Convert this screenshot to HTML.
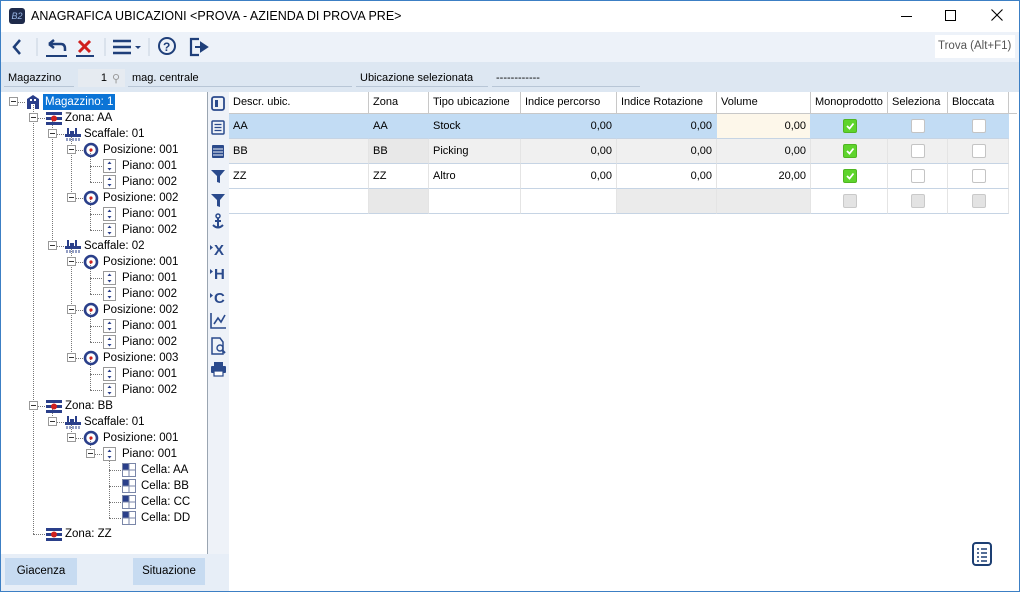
<!DOCTYPE html>
<html><head><meta charset="utf-8"><style>
*{box-sizing:border-box;margin:0;padding:0}
body{width:1020px;height:592px;overflow:hidden;font-family:"Liberation Sans",sans-serif;font-size:12px;color:#000;background:#fff;position:relative}
.abs{position:absolute}
#win{position:absolute;left:0;top:0;width:1020px;height:592px;border:1px solid #3c7fc4}
.title{left:1px;top:1px;width:1018px;height:31px;background:#fff}
.tb{left:1px;top:32px;width:1018px;height:30px;background:#edf2f9}
.fr{left:1px;top:62px;width:1018px;height:30px;background:#dde7f2}
.fld{position:absolute;top:69px;height:18px;border-bottom:1px solid #b8c6d6;padding:3px 4px;font-size:11px;white-space:nowrap}
.tree{left:1px;top:92px;width:207px;height:462px;background:#fff;border-right:1px solid #9aa5b1}
.tr{position:absolute;height:16px;font-size:11.5px;line-height:16px;white-space:nowrap}
.box{position:absolute;width:9px;height:9px;border:1px solid #999;background:#fff}
.box:after{content:"";position:absolute;left:1px;top:3px;width:5px;border-top:1px solid #333}
.vl{position:absolute;border-left:1px dotted #777;width:0}
.hl{position:absolute;border-top:1px dotted #777;height:0}
.ic{position:absolute;width:16px;height:16px}
.side{left:208px;top:92px;width:21px;height:462px;background:#eef2f8}
.bot{left:1px;top:554px;width:228px;height:37px;background:#e7eef7}
.btn{position:absolute;top:558px;height:27px;background:#c7dbf1;text-align:center;line-height:27px;font-size:11.5px}
.grid{left:229px;top:92px}
.c{position:absolute;height:25px;border-right:1px solid #d0d0d0;border-bottom:1px solid #c6d4e4;padding:0 4px;line-height:24px;font-size:11px;white-space:nowrap}
.h{height:22px;line-height:21px;background:#fff;border-right:1px solid #c8c8c8;border-bottom:1px solid #c8c8c8}
.r{text-align:right}
.cb{position:absolute;width:14px;height:14px;border:1px solid #c4c4c4;border-radius:2px;background:#fff}
.cbg{background:#5ed42c;border-color:#4fb521}
.cbd{background:#e3e3e3;border-color:#c9c9c9}
</style></head><body>
<div id="win"></div>
<div class="abs title">
 <div class="abs" style="left:8px;top:7px;width:16px;height:16px;background:#1e2a4a;border-radius:3px;color:#9ab7e6;font-size:9px;font-style:italic;line-height:16px;text-align:center">B2</div>
 <div class="abs" style="left:30px;top:8px;font-size:12.5px">ANAGRAFICA UBICAZIONI &lt;PROVA - AZIENDA DI PROVA PRE&gt;</div>
 <div class="abs" style="left:900px;top:15px;width:11px;border-top:1px solid #000"></div>
 <div class="abs" style="left:944px;top:9px;width:11px;height:11px;border:1px solid #000"></div>
 <svg class="abs" style="left:990px;top:8px" width="12" height="12"><path d="M0.5 0.5L11.5 11.5M11.5 0.5L0.5 11.5" stroke="#000" stroke-width="1.1"/></svg>
</div>
<div class="abs tb">
 <svg class="abs" style="left:0;top:0" width="240" height="30">
  <path d="M19 8 L13 15 L19 22" stroke="#1f3f7a" stroke-width="2.5" fill="none"/>
  <line x1="36" y1="6" x2="36" y2="24" stroke="#c8d2de"/>
  <path d="M48 12 L53 8 M48 12 L53 16 M48 12 H60 Q64 12 64 17 V19" stroke="#1f3f7a" stroke-width="2.5" fill="none"/>
  <line x1="45" y1="24" x2="66" y2="24" stroke="#1f3f7a" stroke-width="2"/>
  <path d="M78 9 L89 20 M89 9 L78 20" stroke="#d0201e" stroke-width="3"/>
  <line x1="75" y1="24" x2="93" y2="24" stroke="#1f3f7a" stroke-width="2"/>
  <line x1="104" y1="6" x2="104" y2="24" stroke="#c8d2de"/>
  <path d="M112 9 H130 M112 15 H130 M112 21 H130" stroke="#1f3f7a" stroke-width="2.5"/>
  <path d="M134 14 L140 14 L137 17Z" fill="#1f3f7a"/>
  <line x1="148" y1="6" x2="148" y2="24" stroke="#c8d2de"/>
  <circle cx="166" cy="14" r="8" stroke="#1f3f7a" stroke-width="2" fill="none"/>
  <text x="162" y="19" font-size="12" font-weight="bold" fill="#1f3f7a" font-family="Liberation Sans">?</text>
  <path d="M198 7 H190 V23 H198" stroke="#1f3f7a" stroke-width="2.2" fill="none"/>
  <path d="M194 15 H200 V11 L206 15 L200 19 V15" fill="#1f3f7a" stroke="#1f3f7a" stroke-width="2"/>
 </svg>
 <div class="abs" style="left:934px;top:3px;width:80px;height:23px;background:#fff;color:#555;font-size:11.5px;line-height:23px;padding-left:3px">Trova (Alt+F1)</div>
</div>
<div class="abs fr"></div>
<div class="fld" style="left:4px;width:70px">Magazzino</div>
<div class="fld" style="left:78px;width:47px;background:#e6ebf1;text-align:right;padding-right:18px;border-bottom:none">1</div>
<div class="abs" style="left:112px;top:72px;font-size:11px;color:#999">⚲</div>
<div class="fld" style="left:128px;width:224px">mag. centrale</div>
<div class="fld" style="left:356px;width:132px">Ubicazione selezionata</div>
<div class="fld" style="left:492px;width:148px">------------</div>

<div class="abs tree" id="tree"></div>
<div class="abs side">
 <svg width="21" height="300">
  <g fill="#2a4a8c" stroke="#2a4a8c">
   <rect x="4" y="5" width="12" height="13" rx="2" fill="none" stroke-width="1.8"/><rect x="7" y="8" width="3" height="7" stroke="none"/>
   <rect x="4" y="29" width="12" height="13" rx="1" fill="none" stroke-width="1.5"/><path d="M6.5 32.5H13.5M6.5 35.5H13.5M6.5 38.5H13.5" stroke-width="1.2"/>
   <rect x="4" y="53" width="12" height="13" rx="1" stroke="none"/><path d="M5 57H15M5 60H15M5 63H15" stroke="#eef2f8" stroke-width="1"/>
   <path d="M3 78H17L12 84V91L9 90V84Z" stroke="none"/>
   <path d="M3 102H17L12 108V115L9 114V108Z" stroke="none"/>
   <circle cx="10" cy="124" r="2" fill="none" stroke-width="1.5"/><path d="M10 126V136M5 133Q10 138 15 133M7 129H13" fill="none" stroke-width="2"/>
   <text x="6" y="163" font-size="15" font-weight="bold" stroke="none" font-family="Liberation Sans">X</text><path d="M2 153L5 155.5L2 158Z" stroke="none"/>
   <text x="6" y="187" font-size="15" font-weight="bold" stroke="none" font-family="Liberation Sans">H</text><path d="M2 177L5 179.5L2 182Z" stroke="none"/>
   <text x="6" y="211" font-size="15" font-weight="bold" stroke="none" font-family="Liberation Sans">C</text><path d="M2 201L5 203.5L2 206Z" stroke="none"/>
   <path d="M3 221V236H18M6 232L10 226L13 230L17 223" fill="none" stroke-width="1.6"/>
   <path d="M12 246H4V262H15V250Z" fill="none" stroke-width="1.5"/><circle cx="12" cy="256" r="3" fill="none" stroke-width="1.4"/><path d="M14 258L17 261" stroke-width="2"/>
   <rect x="6" y="270" width="9" height="4" stroke="none"/><rect x="3" y="274" width="15" height="7" rx="1" stroke="none"/><rect x="6" y="279" width="9" height="5" fill="#fff" stroke-width="1.2"/>
  </g>
 </svg>
</div>
<div class="abs bot"></div>
<div class="btn" style="left:5px;width:72px">Giacenza</div>
<div class="btn" style="left:133px;width:72px">Situazione</div>

<div class="abs grid" id="grid"></div>
<svg class="abs" style="left:971px;top:541px" width="22" height="26"><rect x="2" y="2" width="18" height="22" rx="3" fill="none" stroke="#1d3f73" stroke-width="2"/><path d="M6 8H8M10 8H16M6 12H8M10 12H16M6 16H8M10 16H16M6 20H8M10 20H16" stroke="#1d3f73" stroke-width="1.6"/></svg>

<script>
var T=document.getElementById('tree');
var rows=[[0,'m','Magazzino: 1',1],[1,'z','Zona: AA',1],[2,'s','Scaffale: 01',1],[3,'p','Posizione: 001',1],[4,'n','Piano: 001'],[4,'n','Piano: 002'],[3,'p','Posizione: 002',1],[4,'n','Piano: 001'],[4,'n','Piano: 002'],[2,'s','Scaffale: 02',1],[3,'p','Posizione: 001',1],[4,'n','Piano: 001'],[4,'n','Piano: 002'],[3,'p','Posizione: 002',1],[4,'n','Piano: 001'],[4,'n','Piano: 002'],[3,'p','Posizione: 003',1],[4,'n','Piano: 001'],[4,'n','Piano: 002'],[1,'z','Zona: BB',1],[2,'s','Scaffale: 01',1],[3,'p','Posizione: 001',1],[4,'n','Piano: 001',1],[5,'c','Cella: AA'],[5,'c','Cella: BB'],[5,'c','Cella: CC'],[5,'c','Cella: DD'],[1,'z','Zona: ZZ']];
var ic={m:'<svg width="16" height="16"><path d="M2 5L8 1L14 5V15H10V10H6V15H2Z" fill="#2a3f8a"/><rect x="5" y="5" width="2" height="2" fill="#fff"/><rect x="9" y="5" width="2" height="2" fill="#fff"/></svg>',
z:'<svg width="18" height="16"><rect x="1" y="2" width="16" height="3" fill="#2a3f8a"/><rect x="1" y="7" width="16" height="3" fill="#2a3f8a"/><rect x="1" y="12" width="16" height="3" fill="#2a3f8a"/><circle cx="9" cy="8.5" r="3" fill="#d0201e"/></svg>',
s:'<svg width="18" height="16"><rect x="3" y="2" width="2" height="7" fill="#2a3f8a"/><rect x="11" y="2" width="2" height="7" fill="#2a3f8a"/><rect x="1" y="8" width="16" height="3" fill="#2a3f8a"/><path d="M3 12V15M6 12V15M9 12V15M12 12V15M15 12V15" stroke="#2a3f8a"/><rect x="6" y="5" width="4" height="3" fill="#2a3f8a"/></svg>',
p:'<svg width="16" height="16"><circle cx="8" cy="8" r="6" fill="none" stroke="#2a3f8a" stroke-width="2.6"/><circle cx="8" cy="8" r="1.6" fill="#d0201e"/></svg>',
n:'<svg width="16" height="16"><rect x="1.5" y="1.5" width="12" height="13" fill="#fff" stroke="#999"/><path d="M5.5 6L7.5 3.5L9.5 6ZM5.5 10L7.5 12.5L9.5 10Z" fill="#2a3f8a"/></svg>',
c:'<svg width="16" height="16"><rect x="1.5" y="1.5" width="13" height="13" fill="#fff" stroke="#7a86a8"/><rect x="2" y="2" width="6" height="6" fill="#2a3f8a"/><path d="M8 2V14M2 8H14" stroke="#7a86a8"/></svg>'};
var h='';var C=[13,33,52,71,90,109];
var vls=[[1,0,27],[2,1,9],[3,2,6],[3,9,16],[4,3,5],[4,6,8],[4,10,12],[4,13,15],[4,16,18],[2,19,20],[3,20,21],[4,21,22],[5,22,26]];
vls.forEach(function(v){h+='<div class="vl" style="left:'+(C[v[0]]-1)+'px;top:'+(10+16*v[1])+'px;height:'+(16*(v[2]-v[1]))+'px"></div>';});
rows.forEach(function(r,i){var y=2+i*16;var l=r[0];var cx=C[l];var bl=cx-5;
 h+='<div class="hl" style="left:'+(cx-1)+'px;top:'+(y+8)+'px;width:'+12+'px"></div>';
 if(r[3])h+='<div class="box" style="left:'+bl+'px;top:'+(y+3)+'px"></div>';
 h+='<div class="ic" style="left:'+(bl+16)+'px;top:'+y+'px">'+ic[r[1]]+'</div>';
 var sel=i==0?'background:#0b74d6;color:#fff;padding:0 2px;':'';
 h+='<div class="tr" style="left:'+(bl+(i==0?34:36))+'px;top:'+y+'px;'+sel+'">'+r[2]+'</div>';});
T.innerHTML=h;
var G=document.getElementById('grid');
var cols=[[0,140,'Descr. ubic.'],[140,60,'Zona'],[200,92,'Tipo ubicazione'],[292,96,'Indice percorso'],[388,100,'Indice Rotazione'],[488,94,'Volume'],[582,77,'Monoprodotto'],[659,60,'Seleziona'],[719,61,'Bloccata']];
var g='';cols.forEach(function(c){g+='<div class="c h" style="left:'+c[0]+'px;top:0;width:'+c[1]+'px">'+c[2]+'</div>';});
g+='<div class="c h" style="left:780px;top:0;width:1px;border-right:none"></div>';
var data=[['AA','AA','Stock','0,00','0,00','0,00'],['BB','BB','Picking','0,00','0,00','0,00'],['ZZ','ZZ','Altro','0,00','0,00','20,00'],['','','','','','']];
data.forEach(function(d,i){var y=22+i*25;var bg=i==0?'#c2dcf4':(i==1?'#f0f0f0':'#fff');
 cols.forEach(function(c,j){var b=bg;
  if(i==0&&j==5)b='#fdf7ea';
  if((i==1||i==3)&&j==1)b='#e8e8e8';
  if(i==3&&(j==4||j==5))b='#ebebeb';
  var txt=j<6?d[j]:'';var cls='c'+(j>=3&&j<6?' r':'');
  g+='<div class="'+cls+'" style="left:'+c[0]+'px;top:'+y+'px;width:'+c[1]+'px;background:'+b+';border-right-color:'+(i==0?'#c2dcf4':'#e4e4e4')+'">'+txt+'</div>';
  if(j>=6){var k=j==6?(i<3?' cbg':' cbd'):(i==3?' cbd':'');
   g+='<div class="cb'+k+'" style="left:'+(c[0]+c[1]/2-7)+'px;top:'+(y+5)+'px">'+(j==6&&i<3?'<svg width="12" height="12" style="position:absolute;left:0;top:0"><path d="M3 6L5.5 8.5L9.5 3.5" stroke="#fff" stroke-width="1.8" fill="none"/></svg>':'')+'</div>';}
 });});
G.innerHTML=g;
</script>
</body></html>
